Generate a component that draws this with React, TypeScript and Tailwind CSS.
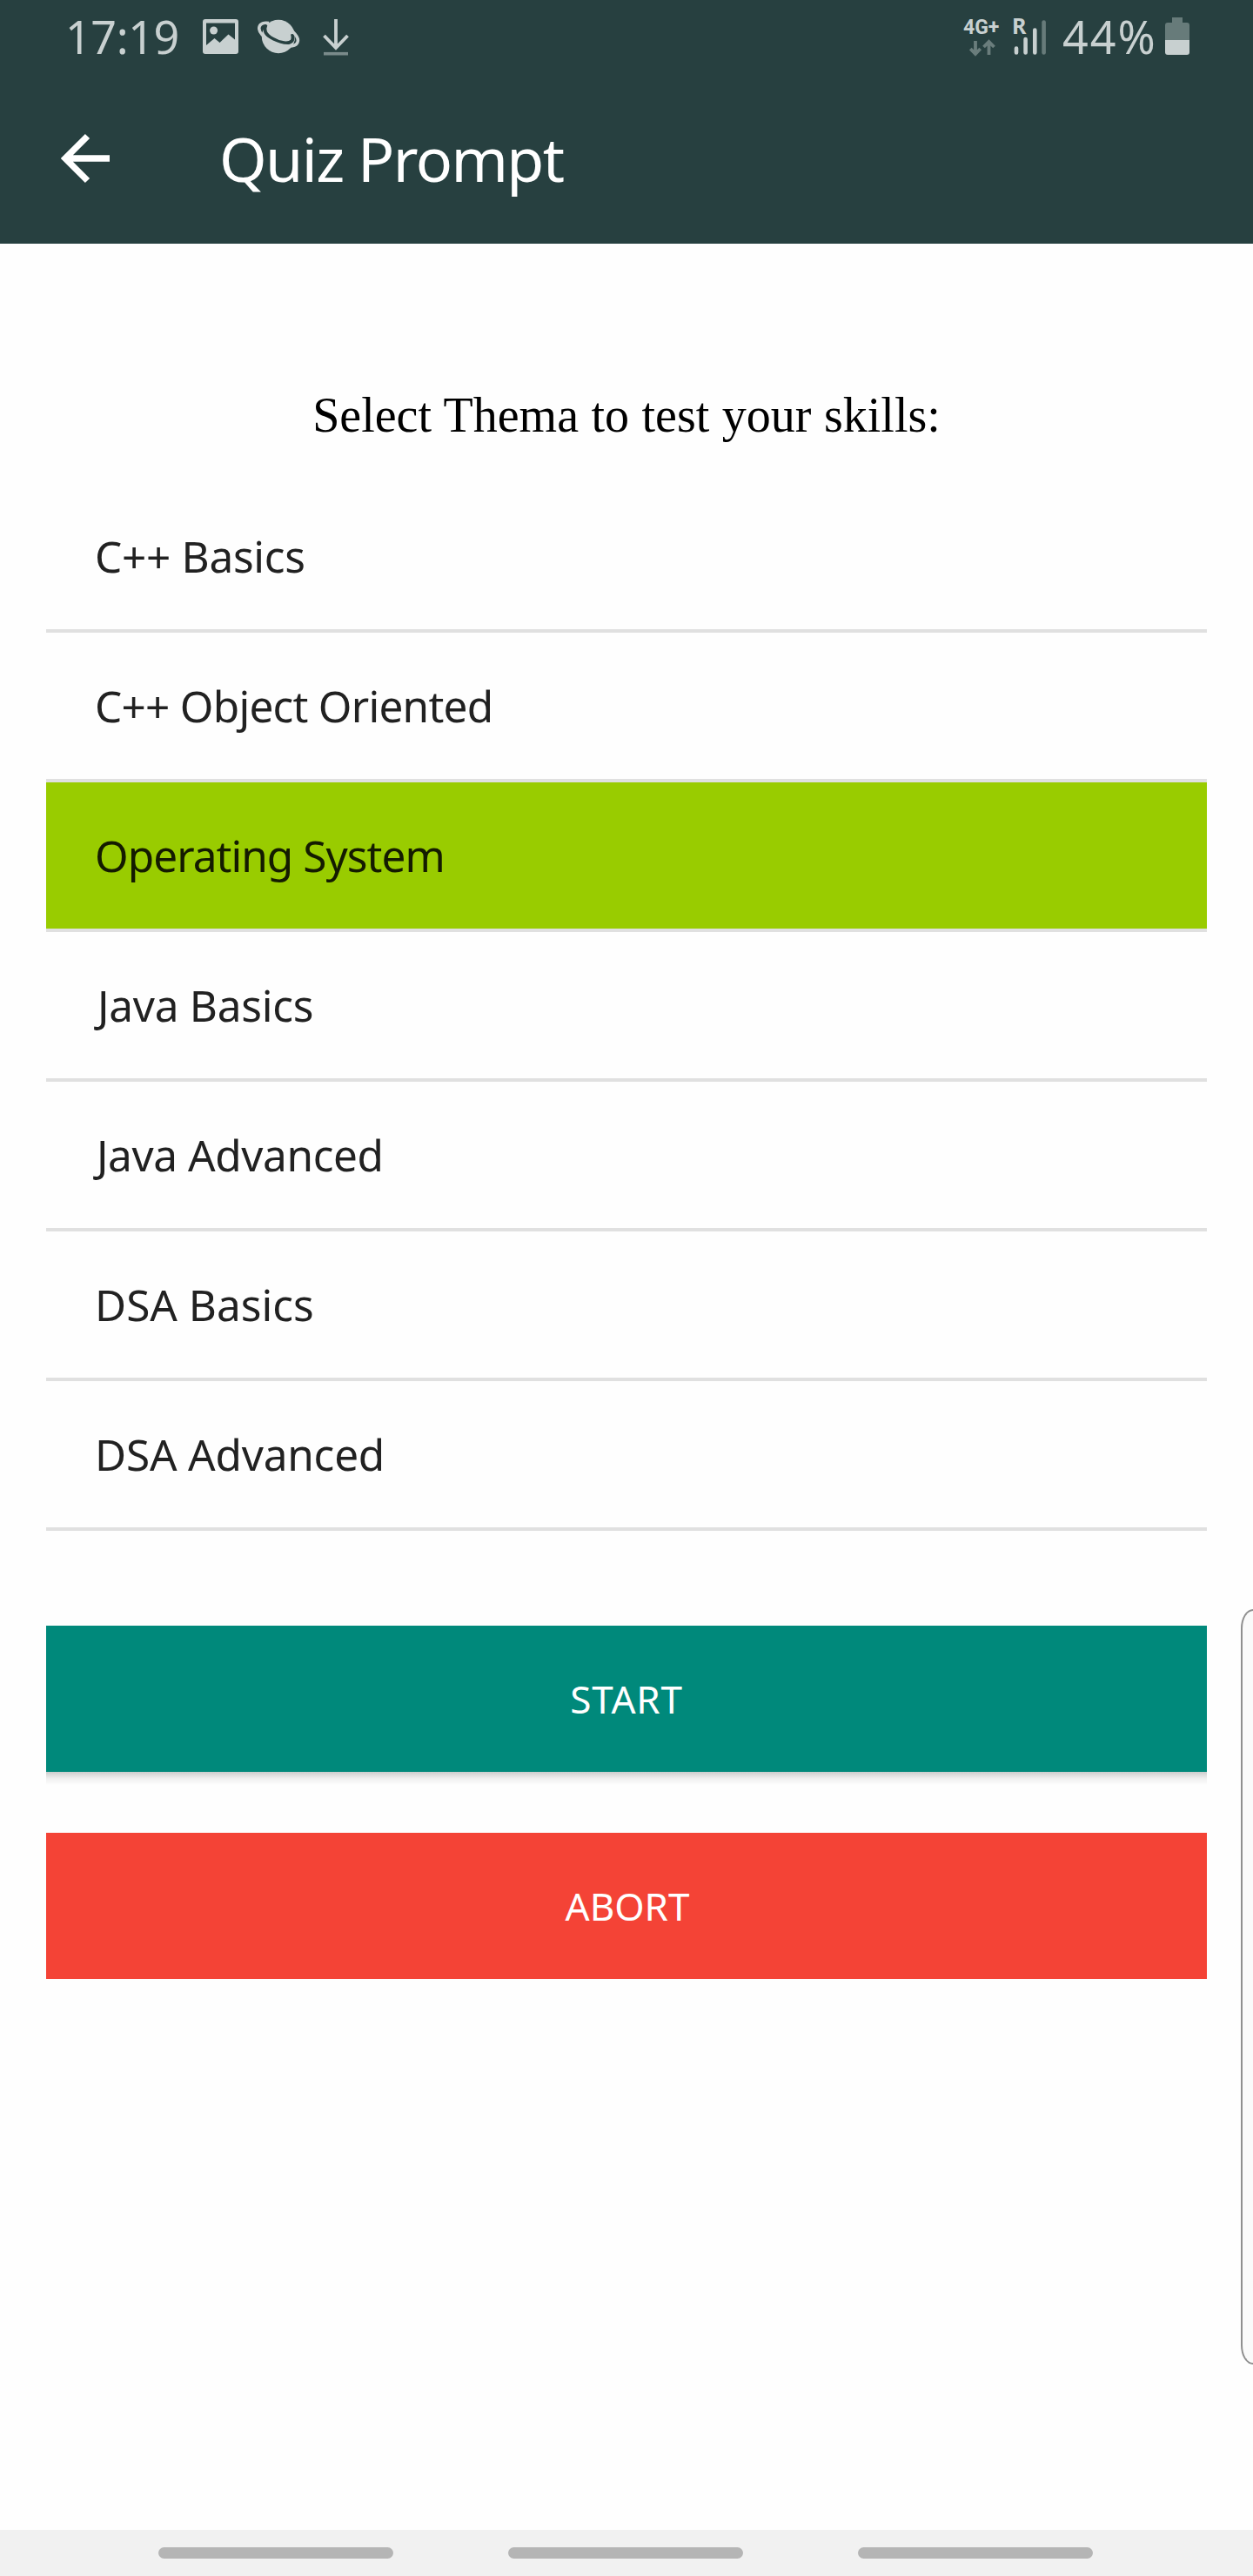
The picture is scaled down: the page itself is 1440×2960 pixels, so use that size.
import React from "react";

const topics = [
  { label: "C++ Basics", style: "pl-[56px] tracking-[-0.3px]" },
  { label: "C++ Object Oriented", style: "pl-[56px] tracking-[-0.75px]" },
  { label: "Operating System", style: "pl-[56px] tracking-[-0.95px]", selected: true },
  { label: "Java Basics", style: "pl-[59px] tracking-[-0.25px]" },
  { label: "Java Advanced", style: "pl-[58px] tracking-[-0.4px]" },
  { label: "DSA Basics", style: "pl-[56px] tracking-[0px]" },
  { label: "DSA Advanced", style: "pl-[56px] tracking-[-0.2px]" },
];

function StatusBar() {
  return (
    <div className="flex h-[89px] items-start justify-between pl-[75px] pr-[73px] text-[#c8d0d0]">
      <div className="flex items-start">
        <span className="w-[158px] pt-[7px] text-[52px] leading-[70px] tracking-[-0.4px]">17:19</span>
        <svg className="mt-[22px]" width="41" height="40" viewBox="0 0 41 40" fill="currentColor">
          <path
            fillRule="evenodd"
            d="M3 0h35a3 3 0 0 1 3 3v34a3 3 0 0 1-3 3H3a3 3 0 0 1-3-3V3a3 3 0 0 1 3-3zM4 4.500v25.500l9.500-8 6 5 10-9.500 7.500 6V4.500z"
          />
          <circle cx="12.600" cy="13" r="4.500" />
        </svg>
        <svg className="ml-[22px] mt-[22px]" width="49" height="40" viewBox="0 0 49 40">
          <circle cx="24" cy="20" r="19.200" fill="#c8d0d0" />
          <path d="M9.500 6.500C6.500 13 9 17.500 17 22.500c9 5.500 19 6.500 22.500 2.500 1.500-2 1.500-4 .5-8" fill="none" stroke="#274040" strokeWidth="4" />
          <path
            d="M13 4.500C7.500 3.500 3 5 2 9c-1.500 5.500 5 12 15 17 11.500 5.500 25 7 28.500 1.500 2.400-4-.2-8.500-5-13"
            fill="none"
            stroke="#c8d0d0"
            strokeWidth="3.600"
          />
        </svg>
        <svg className="ml-[26px] mt-[22px]" width="30" height="42" viewBox="0 0 30 42" fill="none">
          <path d="M15 0v33M1.500 19 15 33l13.500-14" stroke="#c8d0d0" strokeWidth="3.800" />
          <path d="M1 39.700h28" stroke="#7a8b8b" strokeWidth="3.600" />
        </svg>
      </div>

      <div className="flex items-start">
        <div className="flex w-[56px] flex-col pt-[20px]">
          <span className="font-['Roboto'] text-[23px] font-bold leading-[24px]">4G+</span>
          <svg className="ml-[7px] mt-px" width="30" height="21" viewBox="0 0 30 21" fill="none" stroke="#6a7d7c" strokeWidth="3.800">
            <path d="M7 2v15M1.300 11 7 17l5.700-6M22.500 18V3M16.500 9l6-6 6 6" />
          </svg>
        </div>
        <div className="mr-[18px] flex w-[40px] flex-col pt-[12px]">
          <span className="h-[11px] text-[25px] font-bold leading-[34px]">R</span>
          <svg width="40" height="41" viewBox="0 5 40 41" strokeWidth="4.600" strokeLinecap="round" stroke="#c8d0d0">
            <path d="M5 37.500v5M15.600 27v15.500M26.300 16.500v26" />
            <path d="M36.600 7.500v35" stroke="#677b7a" />
          </svg>
        </div>
        <span className="w-[118px] pt-[7px] text-[52px] leading-[70px] tracking-[2px]">44%</span>
        <svg className="mt-[20px]" width="28" height="43" viewBox="0 0 28 43">
          <path d="M8 0h12v6h5a3 3 0 0 1 3 3v17H0V9a3 3 0 0 1 3-3h5z" fill="#677b7a" />
          <path d="M0 26h28v14a3 3 0 0 1-3 3H3a3 3 0 0 1-3-3z" fill="#c8d0d0" />
        </svg>
      </div>
    </div>
  );
}

export default function App() {
  return (
    <div className="flex h-[2960px] w-[1440px] flex-col overflow-hidden bg-[#fefefe] font-['Noto_Sans',sans-serif]">
      <header className="h-[280px] shrink-0 bg-[#274040]">
        <StatusBar />
        <div className="flex items-start pl-[69px] text-white">
          <svg className="mt-[64px]" width="58" height="58" viewBox="0 0 58 58" fill="none" stroke="currentColor" strokeWidth="7.400">
            <path d="M31.500 3.500 6 29l25.500 25.500M6 29h51" />
          </svg>
          <h1 className="ml-[125px] mt-[45px] text-[70px] font-normal leading-[96px] tracking-[-1.600px] whitespace-nowrap">Quiz Prompt</h1>
        </div>
      </header>

      <main className="relative flex h-[2627px] shrink-0 flex-col px-[53px]">
        <h2 className="mt-[161px] h-[114px] text-center font-['Liberation_Serif',serif] text-[56px] leading-[72px] text-black whitespace-nowrap [word-spacing:0.5px]">
          Select Thema to test your skills:
        </h2>
        <ul>
          {topics.map((t) => (
            <li
              key={t.label}
              className={`h-[172px] border-b-4 border-[#e0e0e0] bg-clip-padding ${t.selected ? "bg-[#99cc00] text-[#141b00]" : "text-[#212121]"}`}
            >
              <span className={`block pt-[50px] text-[49.500px] leading-[68px] whitespace-nowrap ${t.style}`}>{t.label}</span>
            </li>
          ))}
        </ul>
        <button className="mt-[109px] h-[168px] shrink-0 bg-[#00897b] text-center text-[44px] leading-[168px] tracking-[0.8px] text-white">START</button>
        <div className="h-[15px] bg-linear-to-b from-[#cdcdcd] via-[#efefef] to-[#fefefe]" />
        <button className="mt-[55px] h-[168px] shrink-0 bg-[#f44336] pl-[2px] text-center text-[44px] leading-[168px] text-white">ABORT</button>
        <div className="absolute right-0 top-[1569px] h-[868px] w-[14px] rounded-l-[14px_22px] border-2 border-r-0 border-[#8f8f8f] bg-[#fafafa]" />
      </main>

      <nav className="flex h-[53px] shrink-0 gap-[132px] bg-[#f1f1f1] pl-[182px] pt-[20px]">
        <span className="h-[13px] w-[270px] rounded-[7px] bg-[#b5b5b5]" />
        <span className="h-[13px] w-[270px] rounded-[7px] bg-[#b5b5b5]" />
        <span className="h-[13px] w-[270px] rounded-[7px] bg-[#b5b5b5]" />
      </nav>
    </div>
  );
}
